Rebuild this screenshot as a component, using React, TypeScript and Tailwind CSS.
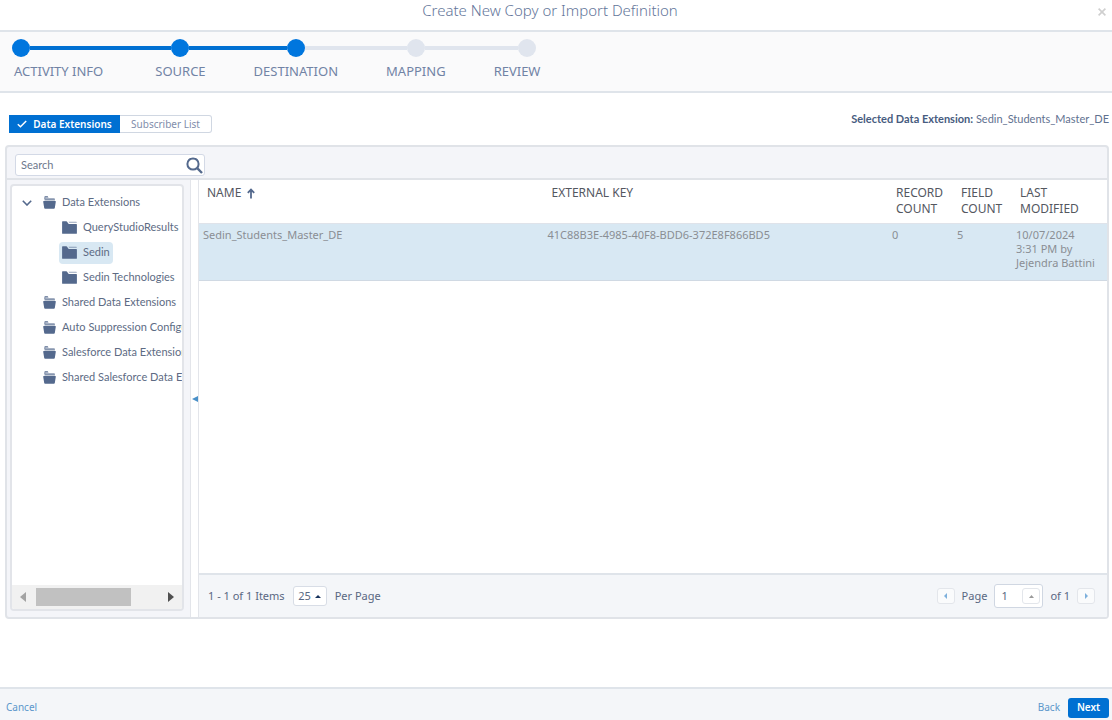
import React, { useState } from "react";

type Step = {
  label: string;
  done: boolean;
};

type TreeNode = {
  name: string;
  level: number;
  open?: boolean;
};

type DataExtension = {
  name: string;
  externalKey: string;
  recordCount: number;
  fieldCount: number;
  lastModified: string;
};

const steps: Step[] = [
  { label: "ACTIVITY INFO", done: true },
  { label: "SOURCE", done: true },
  { label: "DESTINATION", done: true },
  { label: "MAPPING", done: false },
  { label: "REVIEW", done: false },
];

const tree: TreeNode[] = [
  { name: "Data Extensions", level: 0, open: true },
  { name: "QueryStudioResults", level: 1 },
  { name: "Sedin", level: 1 },
  { name: "Sedin Technologies", level: 1 },
  { name: "Shared Data Extensions", level: 0 },
  { name: "Auto Suppression Configuration", level: 0 },
  { name: "Salesforce Data Extensions", level: 0 },
  { name: "Shared Salesforce Data Extensions", level: 0 },
];

const rows: DataExtension[] = [
  {
    name: "Sedin_Students_Master_DE",
    externalKey: "41C88B3E-4985-40F8-BDD6-372E8F866BD5",
    recordCount: 0,
    fieldCount: 5,
    lastModified: "10/07/2024\n3:31 PM by\nJejendra Battini",
  },
];

const OpenFolderIcon = () => (
  <svg viewBox="0 0 13 13" className="size-[13px] shrink-0" fill="#54698d">
    <path d="M2 .2h2.2c.3 0 .5.1.7.4l.6 1H2.2V3H1.5V.7c0-.3.2-.5.5-.5z" />
    <path d="M2.2 2.2h8.9c.5 0 .8.3.8.8v1.5H1.5V2.9c0-.4.3-.7.7-.7z" opacity=".7" />
    <path d="M.7 5h11.6c.4 0 .6.3.5.7l-1 6.2c-.1.5-.4.8-.9.8H2.1c-.5 0-.8-.3-.9-.8l-1-6.2c0-.4.1-.7.5-.7z" />
  </svg>
);

const ClosedFolderIcon = () => (
  <svg viewBox="0 0 15 13" className="h-[13px] w-[15px] shrink-0" fill="#54698d">
    <path d="M.7.2h3.6c.4 0 .6.2.8.5l1 1.6c.2.4.5.6.9.6h7.3c.4 0 .6.3.6.6v8.7c0 .4-.3.6-.6.6H.7c-.4 0-.6-.3-.6-.6V.8C.1.4.3.2.7.2z" />
    <path d="M6.6.8h7.6c.4 0 .6.2.6.6v.3H7.2z" opacity=".6" />
  </svg>
);

const Triangle = ({ points, className }: { points: string; className: string }) => (
  <svg viewBox="0 0 10 10" className={className} preserveAspectRatio="none">
    <polygon points={points} fill="currentColor" />
  </svg>
);

const UP = "5,0 10,10 0,10";
const LEFT = "10,0 10,10 0,5";
const RIGHT = "0,0 10,5 0,10";

const Stepper = () => (
  <ol className="flex border-b-2 border-[#dfe4ea] bg-[#fafafb] pt-[7px] pb-[11px] pl-3">
    {steps.map((step, index) => {
      const first = index === 0;
      const last = index === steps.length - 1;
      const next = steps[index + 1];
      return (
        <li key={step.label}>
          <div className="flex items-center">
            {!first && (
              <span className={`h-1 flex-1 ${step.done ? "bg-[#0070d2]" : "bg-[#e0e5ee]"}`} />
            )}
            <span
              className={`size-[18px] rounded-full ${step.done ? "bg-[#0076de]" : "bg-[#e0e5ee]"} ${last ? "mr-1" : ""}`}
            />
            {!last && (
              <span className={`h-1 flex-1 ${next.done ? "bg-[#0070d2]" : "bg-[#e0e5ee]"}`} />
            )}
          </div>
          <div
            className={`pt-[5px] text-[13px] leading-[18px] text-[#7183a5] ${first ? "pr-7 pl-0.5" : last ? "pl-6" : "px-6"}`}
          >
            {step.label}
          </div>
        </li>
      );
    })}
  </ol>
);

const FolderTree = () => {
  const [selected, setSelected] = useState("Sedin");

  return (
    <div className="flex w-[183px] shrink-0 flex-col pt-1 pr-1.5 pb-1.5 pl-[3px]">
      <div className="flex flex-1 flex-col overflow-hidden rounded border-2 border-[#e2e4e9] bg-white">
        <ul className="flex-1 overflow-hidden pt-1">
          {tree.map((node) => (
            <li
              key={node.name}
              className={`flex h-[25px] items-center ${node.level === 1 ? "pl-[47px]" : "pl-2.5"}`}
            >
              {node.level === 0 && (
                <span className="flex w-[18px] shrink-0">
                  {node.open && (
                    <svg viewBox="0 0 10 6" className="h-1.5 w-2.5" fill="none" stroke="#54698d" strokeWidth="1.6">
                      <path d="M.8.8 5 5l4.2-4.2" />
                    </svg>
                  )}
                </span>
              )}
              <button
                onClick={() => setSelected(node.name)}
                className={`flex h-[22px] items-center gap-1.5 rounded px-[3px] font-['Lato',sans-serif] text-[11px] whitespace-nowrap text-[#5d6b84] ${
                  selected === node.name ? "bg-[#d8e8f3]" : ""
                }`}
              >
                {node.level === 0 ? <OpenFolderIcon /> : <ClosedFolderIcon />}
                {node.name}
              </button>
            </li>
          ))}
        </ul>
        <div className="flex h-6 items-center bg-[#f1f1f1] px-2">
          <Triangle points={LEFT} className="h-2.5 w-1.5 text-[#a3a3a3]" />
          <div className="flex-1 px-2.5">
            <div className="h-[18px] w-[95px] bg-[#c1c1c1]" />
          </div>
          <Triangle points={RIGHT} className="h-2.5 w-1.5 text-[#505050]" />
        </div>
      </div>
    </div>
  );
};

const ExtensionTable = () => (
  <table className="w-full table-fixed border-collapse text-left">
    <thead>
      <tr className="h-[43px] border-b border-[#dfe3ea] align-top text-[12px] leading-4 text-[#54575f]">
        <th className="pt-[5px] pl-2 font-normal">
          <span className="flex items-center gap-1.5">
            NAME
            <svg viewBox="0 0 8 11" className="h-[11px] w-2" fill="none" stroke="#54698d" strokeWidth="1.8">
              <path d="M4 10.5V1.6M.8 4.8 4 1.6l3.2 3.2" />
            </svg>
          </span>
        </th>
        <th className="pt-[5px] pl-2 font-normal">EXTERNAL KEY</th>
        <th className="w-[65px] pt-[5px] pl-2 font-normal">RECORD COUNT</th>
        <th className="w-[59px] pt-[5px] pl-2 font-normal">FIELD COUNT</th>
        <th className="w-[95px] pt-[5px] pl-2 font-normal">LAST MODIFIED</th>
      </tr>
    </thead>
    <tbody>
      {rows.map((row) => (
        <tr
          key={row.externalKey}
          className="h-[57px] border-b border-[#d0d9e3] bg-[#d8e8f3] align-top text-[11px] leading-[14px] text-[#8a8e93]"
        >
          <td className="pt-1 pl-1">{row.name}</td>
          <td className="pt-1 pl-1">{row.externalKey}</td>
          <td className="pt-1 pl-1">{row.recordCount}</td>
          <td className="pt-1 pl-1">{row.fieldCount}</td>
          <td className="pt-1 pl-1 whitespace-pre-line">{row.lastModified}</td>
        </tr>
      ))}
    </tbody>
  </table>
);

const Pager = () => {
  const [page, setPage] = useState("1");

  return (
    <div className="flex h-11 items-center justify-between border-t-2 border-[#dfe4ea] bg-[#f4f6f9] pr-3 pl-[9px] text-[11px] text-[#596782]">
      <div className="flex items-center gap-2">
        <span>1 - 1 of 1 Items</span>
        <label className="flex h-5 w-[34px] items-center justify-center gap-0.5 rounded-[3px] border border-[#d8dde6] bg-white">
          <select aria-label="Items per page" defaultValue="25" className="w-[15px] appearance-none outline-none">
            <option>25</option>
            <option>50</option>
            <option>100</option>
          </select>
          <Triangle points={UP} className="h-[3px] w-1.5 text-[#16325c]" />
        </label>
        <span>Per Page</span>
      </div>
      <div className="flex items-center gap-[7px]">
        <button
          aria-label="Previous page"
          className="flex h-4 w-[18px] items-center justify-center rounded-[3px] border border-[#e3e6eb] bg-[#fafbfc]"
        >
          <Triangle points={LEFT} className="h-1.5 w-[3px] text-[#7db0dc]" />
        </button>
        <label htmlFor="page">Page</label>
        <div className="flex h-6 w-[49px] items-center justify-between rounded-[3px] border border-[#d0d7e2] bg-white pr-0.5 pl-1.5">
          <input
            id="page"
            value={page}
            onChange={(e) => setPage(e.target.value)}
            className="w-4 outline-none"
          />
          <button
            aria-label="Choose page"
            className="flex h-4 w-[18px] items-center justify-center rounded-[3px] border border-[#e3e6eb] bg-white"
          >
            <Triangle points={UP} className="h-[3px] w-[5px] text-[#9a9a9a]" />
          </button>
        </div>
        <span>of 1</span>
        <button
          aria-label="Next page"
          className="flex h-4 w-[18px] items-center justify-center rounded-[3px] border border-[#e3e6eb] bg-[#fafbfc]"
        >
          <Triangle points={RIGHT} className="h-1.5 w-[3px] text-[#7db0dc]" />
        </button>
      </div>
    </div>
  );
};

const App: React.FC = () => {
  const [search, setSearch] = useState("");

  return (
    <div className="flex min-h-screen flex-col bg-white font-['Noto_Sans',sans-serif]">
      <header className="flex h-8 items-start border-b-2 border-[#dfe4ea] pr-0.5 pl-1.5">
        <h1 className="flex-1 text-center text-[15px] leading-5 font-light text-[#64769a]">
          Create New Copy or Import Definition
        </h1>
        <button aria-label="Close" className="flex h-6 w-4 items-center justify-center">
          <svg viewBox="0 0 8 8" className="size-2" stroke="#cfcfcf" strokeWidth="1.6">
            <path d="M.6.6l6.8 6.8M7.4.6.6 7.4" />
          </svg>
        </button>
      </header>

      <Stepper />

      <main className="flex flex-1 flex-col pt-4 pr-[3px] pb-[68px] pl-[5px]">
        <div className="mb-3 flex items-start justify-between pl-1">
          <div className="mt-1.5 flex h-[18px] text-[10px]">
            <button
              aria-pressed="true"
              className="flex w-[111px] items-center justify-center gap-1.5 bg-[#0070d2] font-semibold text-white"
            >
              <svg viewBox="0 0 10 8" className="h-2 w-2.5" fill="none" stroke="currentColor" strokeWidth="1.5">
                <path d="M.8 4.2 3.5 6.8 9.2 1" />
              </svg>
              Data Extensions
            </button>
            <button
              aria-pressed="false"
              className="w-[92px] rounded-r-[3px] border border-l-0 border-[#d0d7e2] bg-white text-[#7f8dab]"
            >
              Subscriber List
            </button>
          </div>
          <p className="pt-0.5 font-['Lato',sans-serif] text-[11px] leading-4 text-[#5f7190]">
            <span className="font-bold text-[#475c80]">Selected Data Extension:</span>{" "}
            Sedin_Students_Master_DE
          </p>
        </div>

        <section className="flex flex-1 flex-col overflow-hidden rounded border-2 border-[#e0e3e8] bg-[#f4f5f9]">
          <div className="flex h-[33px] items-center border-b-2 border-[#e0e3e8] pt-[5px] pl-2">
            <div className="flex h-[22px] w-[190px] items-center rounded-[3px] border border-[#d3d9e6] bg-white pr-px pl-[5px]">
              <input
                aria-label="Search"
                placeholder="Search"
                value={search}
                onChange={(e) => setSearch(e.target.value)}
                className="min-w-0 flex-1 font-['Lato',sans-serif] text-[11px] outline-none placeholder:text-[#6d788c]"
              />
              <svg viewBox="0 0 17 17" className="size-[17px]" fill="none" stroke="#54698d">
                <circle cx="7" cy="7" r="5.6" strokeWidth="2" />
                <path d="M11.2 11.2 16 16" strokeWidth="2.4" />
              </svg>
            </div>
          </div>
          <div className="flex flex-1">
            <FolderTree />
            <button
              aria-label="Collapse folders"
              className="flex w-[9px] shrink-0 items-center justify-center border-x border-[#e3e5ea] bg-white"
            >
              <Triangle points={LEFT} className="h-1.5 w-[6px] text-[#4a90c8]" />
            </button>
            <div className="flex min-w-0 flex-1 flex-col bg-white">
              <div className="flex-1">
                <ExtensionTable />
              </div>
              <Pager />
            </div>
          </div>
        </section>
      </main>

      <footer className="flex h-[33px] items-center justify-between border-t-2 border-[#dfe4ea] bg-[#f4f6f9] pt-1.5 pr-[3px] pl-1.5 text-[10px]">
        <button className="text-[#5b97cb]">Cancel</button>
        <div className="flex items-center gap-2">
          <button className="text-[#5b97cb]">Back</button>
          <button className="h-5 w-[41px] rounded-[3px] bg-[#0070d2] font-semibold text-white">Next</button>
        </div>
      </footer>
    </div>
  );
};

export default App;
